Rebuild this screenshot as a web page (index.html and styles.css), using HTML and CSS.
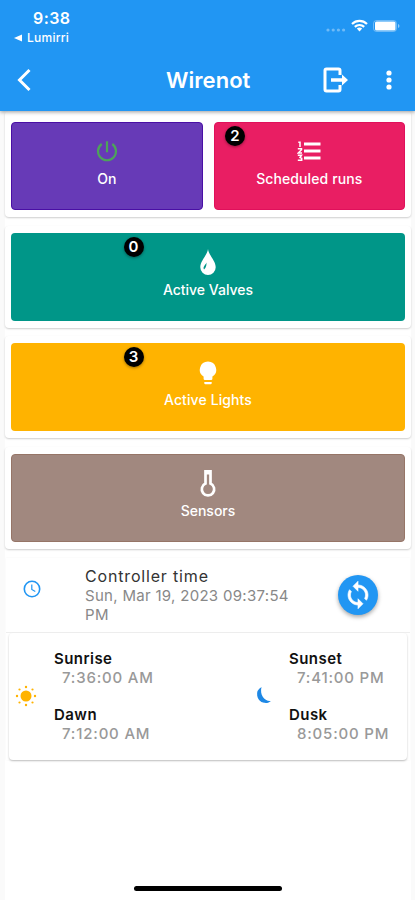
FILE: index.html
```html
<!DOCTYPE html>
<html lang="en">
<head>
<meta charset="utf-8">
<meta name="viewport" content="width=device-width, initial-scale=1">
<title>Wirenot</title>
<link rel="stylesheet" href="styles.css">
</head>
<body>
<div class="screen">
  <header class="header">
    <div class="status">
      <div class="status-left">
        <span class="clock">9:38</span>
        <span class="return"><svg width="8" height="8" viewBox="0 0 8 8"><path d="M8 .4v7.2L0 4z" fill="currentColor"/></svg><span>Lumirri</span></span>
      </div>
      <div class="status-right">
        <svg class="signal" width="20" height="4" viewBox="0 0 20 4" fill="#fff"><circle cx="2" cy="2" r="1.600"/><circle cx="7.200" cy="2" r="1.600"/><circle cx="12.400" cy="2" r="1.600"/><circle cx="17.600" cy="2" r="1.600"/></svg>
        <svg class="wifi" width="17" height="13" viewBox="0 0 17 13" fill="none" stroke="#fff" stroke-width="2.200"><path d="M1 5C5.300.9 11.700.9 16 5"/><path d="M3.800 7.900c2.700-2.500 6.700-2.500 9.400 0"/><path d="M5.800 9.500c1.600-1.400 3.800-1.400 5.400 0L8.500 12.400z" fill="#fff" stroke="none"/></svg>
        <svg class="battery" width="27" height="12" viewBox="0 0 27 12"><rect x=".5" y=".5" width="23" height="11" rx="3" fill="none" stroke="#fff" stroke-opacity=".35"/><rect x="2" y="1.500" width="20.500" height="9" rx="1.500" fill="#fff"/><path d="M25 4q1.500.5 1.500 2T25 8z" fill="#fff" fill-opacity=".5"/></svg>
      </div>
    </div>
    <div class="bar">
      <svg class="back" width="16" height="24" viewBox="0 0 16 24" fill="none" stroke="#fff" stroke-width="3"><path d="M13.500 2L3.500 12l10 10"/></svg>
      <h1>Wirenot</h1>
      <svg class="logout" width="26" height="26" viewBox="0 0 26 26"><path d="M17 8V3.500Q17 2 15.500 2h-12Q2 2 2 3.500v19Q2 24 3.500 24h12q1.500 0 1.500-1.500V18" fill="none" stroke="#fff" stroke-width="3"/><path d="M8 11.300h11V7.500l6 5.500-6 5.500v-3.800H8z" fill="#fff"/></svg>
      <svg class="more" width="6" height="20" viewBox="0 0 6 20" fill="#fff"><circle cx="3" cy="3" r="2.600"/><circle cx="3" cy="10" r="2.600"/><circle cx="3" cy="17" r="2.600"/></svg>
    </div>
  </header>

  <main class="content">
    <section class="card pair">
      <div class="tile power">
        <svg width="24" height="24" viewBox="0 0 24 24" fill="none" stroke="#4da35a" stroke-width="2.200"><path d="M12 2.200v11M6.700 5a9 9 0 1 0 10.600 0"/></svg>
        <span>On</span>
      </div>
      <div class="tile runs">
        <b class="badge">2</b>
        <svg width="24" height="24" viewBox="0 0 24 24" fill="none" stroke="#fff"><path d="M7 5h16.500M7 12h16.500M7 19h16.500" stroke-width="2.900"/><path d="M1.300 3.200h1.700v4.800M.8 9.700h3.700v1L1.300 14H5M.8 16.200h3.700L3 18.500l1.700.8v2H.8" stroke-width="1.500"/></svg>
        <span>Scheduled runs</span>
      </div>
    </section>
    <section class="card">
      <div class="tile valves">
        <b class="badge">0</b>
        <svg width="18" height="28" viewBox="0 0 18 28"><path d="M9 1C8.500 7 1.300 12.500 1.300 19.300a7.700 7.700 0 0 0 15.400 0C16.700 12.500 9.500 7 9 1z" fill="#fff"/><path d="M7.500 14.500C6.500 17 3.500 18.700 5 21.500c.7-.6 2.700-2.500 2.500-7z" fill="#009688"/></svg>
        <span>Active Valves</span>
      </div>
    </section>
    <section class="card">
      <div class="tile lights">
        <b class="badge">3</b>
        <svg width="18" height="24" viewBox="0 0 18 24" fill="#fff"><path d="M9 .5a8.200 8.200 0 0 0-4.400 15.100v2.100q0 1.300 1.300 1.300h6.200q1.300 0 1.300-1.300v-2.100A8.200 8.200 0 0 0 9 .5zM5.300 21h7.400v1.200q0 1.100-1.100 1.100H6.400q-1.100 0-1.100-1.100z"/></svg>
        <span>Active Lights</span>
      </div>
    </section>
    <section class="card">
      <div class="tile sensors">
        <svg width="18" height="29" viewBox="0 0 18 29" fill="none" stroke="#fff" stroke-width="2.700"><path d="M6.500 2.300h5v12.300a6.200 6.200 0 1 1-5 0z"/><path d="M6 3.500h6" stroke-width="4"/></svg>
        <span>Sensors</span>
      </div>
    </section>

    <section class="times">
      <div class="controller">
        <svg class="time-icon" width="18" height="18" viewBox="0 0 18 18" fill="none" stroke="#2196f3" stroke-width="1.600"><circle cx="9" cy="9" r="7.700"/><path d="M8.800 4.500v4.900l3.500 2" stroke-width="1.200"/></svg>
        <div class="controller-text">
          <div class="controller-title">Controller time</div>
          <div class="controller-date">Sun, Mar 19, 2023 09:37:54<br>PM</div>
        </div>
        <div class="sync"><svg width="30" height="30" viewBox="0 0 24 24" fill="#fff"><path d="M12 4V1L8 5l4 4V6c3.310 0 6 2.690 6 6 0 1.010-.25 1.970-.7 2.800l1.460 1.460C19.540 15.030 20 13.570 20 12c0-4.420-3.580-8-8-8zm0 14c-3.310 0-6-2.690-6-6 0-1.010.25-1.970.7-2.800L5.240 7.740C4.460 8.970 4 10.430 4 12c0 4.420 3.580 8 8 8v3l4-4-4-4v3z" stroke="#fff" stroke-width=".5"/></svg></div>
      </div>
      <div class="sun-card">
        <svg class="sun" width="22" height="22" viewBox="0 0 22 22" fill="#ffb300"><circle cx="11" cy="11" r="5.500"/><circle cx="11" cy="2" r="1.200"/><circle cx="11" cy="20" r="1.200"/><circle cx="2" cy="11" r="1.200"/><circle cx="20" cy="11" r="1.200"/><circle cx="4.500" cy="4.500" r="1.100"/><circle cx="17.500" cy="4.500" r="1.100"/><circle cx="4.500" cy="17.500" r="1.100"/><circle cx="17.500" cy="17.500" r="1.100"/></svg>
        <dl>
          <dt>Sunrise</dt><dd>7:36:00 AM</dd>
          <dt>Dawn</dt><dd>7:12:00 AM</dd>
        </dl>
        <svg class="moon" width="16" height="18" viewBox="0 0 16 18" fill="#1e88e5"><path d="M5.500 1A8.500 8.500 0 0 0 8 16.800c2.900.5 5.300-.3 6.900-1.900C8.500 15.600 3.500 9 5.500 1z"/></svg>
        <dl>
          <dt>Sunset</dt><dd>7:41:00 PM</dd>
          <dt>Dusk</dt><dd>8:05:00 PM</dd>
        </dl>
      </div>
    </section>
  </main>
  <footer class="home"><div class="home-bar"></div></footer>
</div>
</body>
</html>
```
FILE: styles.css
```css
* { box-sizing: border-box; }
body { margin: 0; font-family: Inter, "Liberation Sans", sans-serif; background: #fafafa; }
svg { display: block; flex: none; }
.screen { height: 900px; display: flex; flex-direction: column; overflow: hidden; }
.header { position: relative; z-index: 1; flex: none; height: 111px; background: #2196f3; color: #fff; box-shadow: 0 1px 4px rgba(0,0,0,.4); }
.status { height: 50px; display: flex; justify-content: space-between; padding: 8px 16px 0 14px; }
.status-left { display: flex; flex-direction: column; }
.clock { margin-left: 19px; font-size: 16px; line-height: 20px; font-weight: 600; letter-spacing: .4px; }
.return { display: flex; align-items: center; gap: 5px; font-size: 12px; line-height: 20px; font-weight: 500; letter-spacing: .25px; }
.status-right { display: flex; align-items: flex-start; }
.signal { margin: 20px 5px 0 0; opacity: .35; transform: translateX(-8px); }
.wifi { margin: 11px 5px 0 0; transform: translateX(-8px); }
.battery { margin-top: 12px; transform: translateX(0); }
.status-right { margin-right: -8px; }
.signal, .wifi, .battery { transform: translateX(-7px); }
.bar { height: 60px; display: flex; align-items: center; padding: 0 23px 0 16px; }
.bar h1 { margin: 0 0 0 134px; font-size: 22px; line-height: 28px; font-weight: 600; letter-spacing: .05px; }
.logout { margin-left: auto; margin-right: 37px; }

.content { flex: 1; margin: 0 4px 0 5px; background: #fff; }
.card { height: 102px; margin-bottom: 8.7px; padding: 7px 6px 0; display: flex; gap: 11px; background: #fff; border-radius: 4px; box-shadow: 0 1px 2px rgba(0,0,0,.2); }
.pair { height: 106px; padding-top: 11px; }
.tile { position: relative; flex: 1; height: 88px; border-radius: 4px; color: #fff; display: flex; flex-direction: column; align-items: center; font-size: 14px; font-weight: 500; letter-spacing: 0; }
.tile svg { margin-bottom: auto; }
.tile span { line-height: 18px; margin-bottom: 22px; }
.power { background: #673ab7; border: 1px solid #4a0fa5; }
.power svg { margin-top: 16px; }
.power span { margin-bottom: 21px; }
.runs { background: #e91e63; border: 1px solid #e0105b; }
.runs svg { margin-top: 16px; }
.runs span { margin-bottom: 21px; letter-spacing: .1px; }
.valves { background: #009688; }
.valves svg { margin-top: 15px; }
.lights { background: #ffb300; letter-spacing: .1px; }
.lights svg { margin-top: 18px; }
.sensors { background: #a1887f; border: 1px solid #967567; }
.sensors svg { margin-top: 14px; }
.sensors span { margin-bottom: 21px; }
.badge { position: absolute; left: 112.5px; top: 4px; width: 20px; height: 20px; border-radius: 50%; background: #000; text-align: center; font-size: 15px; line-height: 20px; font-weight: 600; letter-spacing: 0; box-shadow: 0 1px 3px rgba(0,0,0,.4); }
.runs .badge { left: 10.500px; top: 3px; }

.times { margin: 0 1px; box-shadow: 0 0 2px rgba(0,0,0,.04); }
.controller { height: 75px; display: flex; border-bottom: 1px solid #eee; padding: 0 32px 0 17px; }
.time-icon { margin-top: 22px; }
.controller-text { margin-left: 44px; padding-top: 8px; }
.controller-title { font-size: 16px; line-height: 20px; color: #333; letter-spacing: .83px; }
.controller-date { font-size: 15px; line-height: 19px; color: #888; letter-spacing: .3px; white-space: nowrap; }
.sync { margin: 17px 0 0 auto; width: 40px; height: 40px; border-radius: 50%; display: grid; place-items: center; background: #2196f3; box-shadow: 0 2px 4px rgba(0,0,0,.35); }
.sun-card { display: flex; margin: 0 3px; height: 127px; border-radius: 4px; box-shadow: 0 1px 2px rgba(0,0,0,.25); clip-path: inset(0 -4px -5px -4px); padding: 16px 0 0 6px; }
.sun { margin-top: 36px; }
.moon { margin-top: 37px; margin-left: 101px; }
dl { margin: 0 0 0 17px; width: 101px; font-size: 15px; white-space: nowrap; }
.moon + dl { margin-left: 17px; }
dt { font-weight: 600; line-height: 19px; color: #111; letter-spacing: .45px; }
dd { margin: 0 0 18px 8px; line-height: 19px; font-weight: 500; color: #999; letter-spacing: .8px; }
.home { height: 20px; margin: 0 4px 0 5px; background: #fff; display: flex; justify-content: center; padding-top: 6px; flex: none; }
.home-bar { width: 148px; height: 5px; border-radius: 3px; background: #000; }
```
